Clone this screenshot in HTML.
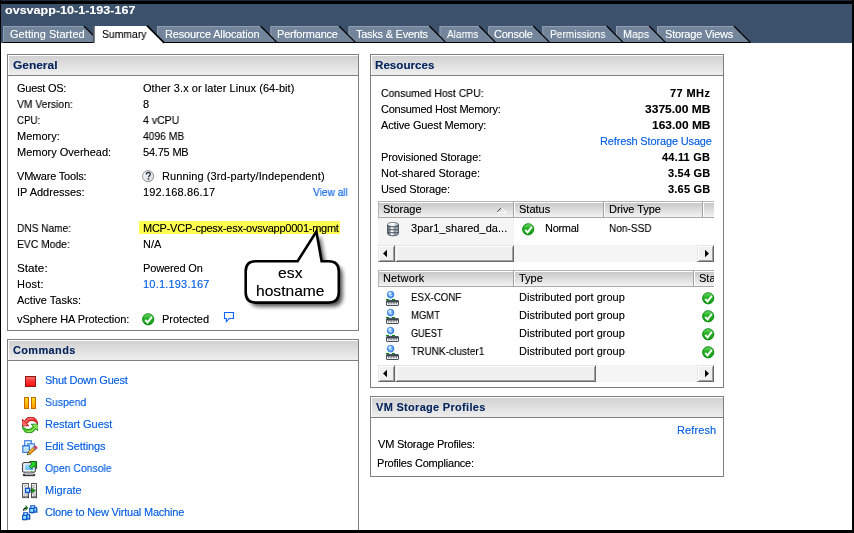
<!DOCTYPE html>
<html><head><meta charset="utf-8"><title>ovsvapp-10-1-193-167</title>
<style>
html,body{margin:0;padding:0;background:#fff;overflow:hidden;}
body{width:854px;height:533px;position:relative;overflow:hidden;font-family:"Liberation Sans",sans-serif;font-size:11px;line-height:13px;color:#000;}
.a{position:absolute;}
.t{position:absolute;white-space:pre;transform-origin:0 50%;will-change:transform;}
.panel{position:absolute;border:1px solid #7f7f7f;background:#fff;box-sizing:border-box;}
.ph{position:absolute;left:0;top:0;right:0;height:20px;border-bottom:1px solid #7f7f7f;background:linear-gradient(#d0d0d0,#eeeeee);box-shadow:inset 1px 1px 0 #fff;}
.th{position:absolute;height:15px;background:linear-gradient(#fff 0,#fff 1px,#c8c8c8 1px,#f3f3f3 100%);border-top:1px solid #b2b2b2;border-bottom:1px solid #a8a8a8;box-sizing:content-box;}
.thd{position:absolute;width:1px;height:15px;background:#a2a2a2;box-shadow:1px 0 0 #fff;}
.sb{position:absolute;height:17px;background:#f4f4f4;background-image:conic-gradient(#fbfbfb 25%,#efefef 0 50%,#fbfbfb 0 75%,#efefef 0);background-size:2px 2px;}
.btn{position:absolute;top:0;height:17px;background:#f0f0f0;border:1px solid;border-color:#e6e6e6 #696969 #696969 #e6e6e6;box-sizing:border-box;box-shadow:inset 1px 1px 0 #fff,inset -1px -1px 0 #a0a0a0;}
</style></head><body>
<!-- frame + header -->
<div class="a" style="left:0;top:0;width:854px;height:43px;background:#3c516c"></div>
<svg class="a" style="left:0;top:0" width="854" height="44" viewBox="0 0 854 44">
<rect x="3" y="42" width="747" height="1" fill="#000"/>
<polygon points="657.2,42 657.2,26 733.9,26 749.9,42" fill="#73859b"/>
<polyline points="657.7,42 657.7,26.5 734.9,26.5" fill="none" stroke="#8f9db1" stroke-width="1"/>
<line x1="733.9" y1="26" x2="750.5" y2="42.6" stroke="#000" stroke-width="1.25"/>
<polygon points="616,42 616,26 649.1,26 665.1,42" fill="#73859b"/>
<polyline points="616.5,42 616.5,26.5 650.1,26.5" fill="none" stroke="#8f9db1" stroke-width="1"/>
<line x1="649.1" y1="26" x2="665.7" y2="42.6" stroke="#000" stroke-width="1.25"/>
<polygon points="542.2,42 542.2,26 606.7,26 622.7,42" fill="#73859b"/>
<polyline points="542.7,42 542.7,26.5 607.7,26.5" fill="none" stroke="#8f9db1" stroke-width="1"/>
<line x1="606.7" y1="26" x2="623.3000000000001" y2="42.6" stroke="#000" stroke-width="1.25"/>
<polygon points="488.3,42 488.3,26 533.3,26 549.3,42" fill="#73859b"/>
<polyline points="488.8,42 488.8,26.5 534.3,26.5" fill="none" stroke="#8f9db1" stroke-width="1"/>
<line x1="533.3" y1="26" x2="549.9" y2="42.6" stroke="#000" stroke-width="1.25"/>
<polygon points="439.5,42 439.5,26 479.2,26 495.2,42" fill="#73859b"/>
<polyline points="440.0,42 440.0,26.5 480.2,26.5" fill="none" stroke="#8f9db1" stroke-width="1"/>
<line x1="479.2" y1="26" x2="495.8" y2="42.6" stroke="#000" stroke-width="1.25"/>
<polygon points="348.5,42 348.5,26 429.3,26 445.3,42" fill="#73859b"/>
<polyline points="349.0,42 349.0,26.5 430.3,26.5" fill="none" stroke="#8f9db1" stroke-width="1"/>
<line x1="429.3" y1="26" x2="445.90000000000003" y2="42.6" stroke="#000" stroke-width="1.25"/>
<polygon points="270.3,42 270.3,26 339.0,26 355.0,42" fill="#73859b"/>
<polyline points="270.8,42 270.8,26.5 340.0,26.5" fill="none" stroke="#8f9db1" stroke-width="1"/>
<line x1="339.0" y1="26" x2="355.6" y2="42.6" stroke="#000" stroke-width="1.25"/>
<polygon points="157,42 157,26 260.5,26 276.5,42" fill="#73859b"/>
<polyline points="157.5,42 157.5,26.5 261.5,26.5" fill="none" stroke="#8f9db1" stroke-width="1"/>
<line x1="260.5" y1="26" x2="277.1" y2="42.6" stroke="#000" stroke-width="1.25"/>
<polygon points="3,42 3,26 83.9,26 99.9,42" fill="#73859b"/>
<polyline points="3.5,42 3.5,26.5 84.9,26.5" fill="none" stroke="#8f9db1" stroke-width="1"/>
<line x1="83.9" y1="26" x2="100.5" y2="42.6" stroke="#000" stroke-width="1.25"/>
<polygon points="93,43 93,26 147.5,26 164.5,43" fill="#fff"/>
<line x1="93.9" y1="26" x2="93.9" y2="43" stroke="#333a44" stroke-width="1.5"/>
<line x1="147" y1="25.6" x2="164.2" y2="42.8" stroke="#000" stroke-width="1.7"/>
</svg>
<!-- panels -->
<div class="panel" style="left:7px;top:54px;width:352px;height:277px"><div class="ph"></div></div>
<div class="panel" style="left:7px;top:339px;width:352px;height:193px;border-bottom:none"><div class="ph"></div></div>
<div class="panel" style="left:370px;top:54px;width:354px;height:334px"><div class="ph"></div></div>
<div class="panel" style="left:370px;top:396px;width:354px;height:81px"><div class="ph"></div></div>
<!-- highlight -->
<div class="a" style="left:139px;top:221px;width:201px;height:13px;background:#ffff4f"></div>
<!-- storage table -->
<div class="a" style="left:378px;top:218px;width:136px;height:27px;background:#f5f5f5"></div>
<div class="th" style="left:378px;top:201px;width:336px"></div>
<div class="thd" style="left:378px;top:202px;background:#b5b5b5;box-shadow:none"></div>
<div class="thd" style="left:513px;top:202px"></div>
<div class="thd" style="left:603px;top:202px"></div>
<div class="thd" style="left:702px;top:202px"></div>
<svg class="a" style="left:494px;top:205px" width="14" height="9" viewBox="494 205 14 9"><path d="M501.3 207.6 L506.6 212.4 H497" fill="none" stroke="#fff" stroke-width="1"/><path d="M497.2 212 L501.2 207.7" fill="none" stroke="#4a4a4a" stroke-width="1"/></svg>
<div class="sb" style="left:378px;top:245px;width:336px">
  <div class="btn" style="left:0;width:17px"></div>
  <div class="btn" style="left:17px;width:119px"></div>
  <div class="btn" style="left:319px;width:17px"></div>
  <svg class="a" style="left:0;top:0" width="336" height="17"><polygon points="5,8.5 9,4.8 9,12.2" fill="#000"/><polygon points="331,8.5 327,4.8 327,12.2" fill="#000"/></svg>
</div>
<!-- network table -->
<div class="th" style="left:378px;top:270px;width:336px"></div>
<div class="thd" style="left:378px;top:271px;background:#b5b5b5;box-shadow:none"></div>
<div class="thd" style="left:513px;top:271px"></div>
<div class="thd" style="left:693px;top:271px"></div>
<div class="sb" style="left:378px;top:365px;width:336px">
  <div class="btn" style="left:0;width:17px"></div>
  <div class="btn" style="left:17px;width:201px"></div>
  <div class="btn" style="left:319px;width:17px"></div>
  <svg class="a" style="left:0;top:0" width="336" height="17"><polygon points="5,8.5 9,4.8 9,12.2" fill="#000"/><polygon points="331,8.5 327,4.8 327,12.2" fill="#000"/></svg>
</div>

<svg width="0" height="0" style="position:absolute"><defs>
<linearGradient id="gG" x1="0" y1="0" x2="0" y2="1"><stop offset="0" stop-color="#6fd86a"/><stop offset="0.45" stop-color="#22b022"/><stop offset="1" stop-color="#149c14"/></linearGradient>
<linearGradient id="gQ" x1="0" y1="0" x2="1" y2="1"><stop offset="0" stop-color="#ffffff"/><stop offset="1" stop-color="#cfd2d6"/></linearGradient>
<linearGradient id="gR" x1="0" y1="0" x2="0" y2="1"><stop offset="0" stop-color="#f27070"/><stop offset="0.5" stop-color="#fb3030"/><stop offset="1" stop-color="#ff1010"/></linearGradient>
<linearGradient id="gO" x1="0" y1="0" x2="0" y2="1"><stop offset="0" stop-color="#ffe020"/><stop offset="1" stop-color="#ff9a00"/></linearGradient>
<linearGradient id="gD" x1="0" y1="0" x2="1" y2="0"><stop offset="0" stop-color="#4e5a68"/><stop offset="0.15" stop-color="#7e8994"/><stop offset="0.38" stop-color="#c9ced4"/><stop offset="0.6" stop-color="#a4acb5"/><stop offset="0.85" stop-color="#727d89"/><stop offset="1" stop-color="#4a5663"/></linearGradient>
<linearGradient id="gDt" x1="0" y1="0" x2="1" y2="0"><stop offset="0" stop-color="#f4f6f8"/><stop offset="0.5" stop-color="#ffffff"/><stop offset="1" stop-color="#9aa4ae"/></linearGradient>
<radialGradient id="gB" cx="0.4" cy="0.35" r="0.75"><stop offset="0" stop-color="#d8ecff"/><stop offset="0.45" stop-color="#5aa2f4"/><stop offset="1" stop-color="#2470dc"/></radialGradient>
<linearGradient id="gS" x1="0" y1="0" x2="1" y2="1"><stop offset="0" stop-color="#b8e4ff"/><stop offset="1" stop-color="#36aaf6"/></linearGradient>
<linearGradient id="gT" x1="0" y1="0" x2="1" y2="1"><stop offset="0" stop-color="#ffffff"/><stop offset="0.5" stop-color="#ececec"/><stop offset="1" stop-color="#b4b4b4"/></linearGradient>
<linearGradient id="gE" x1="0" y1="0" x2="0" y2="1"><stop offset="0" stop-color="#8ecbf6"/><stop offset="1" stop-color="#d6eeff"/></linearGradient>
<linearGradient id="gA" x1="0" y1="0" x2="1" y2="0"><stop offset="0" stop-color="#30f030"/><stop offset="0.6" stop-color="#20d820"/><stop offset="1" stop-color="#0e9a0e"/></linearGradient>
<linearGradient id="gC" x1="0" y1="0" x2="0" y2="1"><stop offset="0" stop-color="#9ed8ff"/><stop offset="1" stop-color="#1f6fd8"/></linearGradient>
</defs></svg>
<svg class="a" style="left:142px;top:169.5px" width="13" height="13" viewBox="0 0 13 13"><circle cx="6.1" cy="6.2" r="5.6" fill="url(#gQ)" stroke="#868c94" stroke-width="0.9"/><path d="M4.3 4.4 C4.3 2.9 5.5 2.5 6.4 2.5 C7.9 2.5 8.7 3.6 8.2 4.7 C7.8 5.5 6.5 5.9 6.5 7.3" fill="none" stroke="#253245" stroke-width="1.35"/><rect x="5.7" y="8.3" width="1.5" height="1.4" fill="#253245"/></svg>
<svg class="a" style="left:142px;top:312.6px" width="13" height="13" viewBox="0 0 13 13"><circle cx="6.2" cy="6.3" r="5.6" fill="url(#gG)" stroke="#0f8c12" stroke-width="1"/><path d="M3.2 6.8 L5.5 9.4 L9.9 3.9" fill="none" stroke="#fff" stroke-width="1.9"/></svg>
<svg class="a" style="left:521.5px;top:222.8px" width="13" height="13" viewBox="0 0 13 13"><circle cx="6.2" cy="6.3" r="5.6" fill="url(#gG)" stroke="#0f8c12" stroke-width="1"/><path d="M3.2 6.8 L5.5 9.4 L9.9 3.9" fill="none" stroke="#fff" stroke-width="1.9"/></svg>
<svg class="a" style="left:702px;top:291.8px" width="13" height="13" viewBox="0 0 13 13"><circle cx="6.2" cy="6.3" r="5.6" fill="url(#gG)" stroke="#0f8c12" stroke-width="1"/><path d="M3.2 6.8 L5.5 9.4 L9.9 3.9" fill="none" stroke="#fff" stroke-width="1.9"/></svg>
<svg class="a" style="left:702px;top:309.8px" width="13" height="13" viewBox="0 0 13 13"><circle cx="6.2" cy="6.3" r="5.6" fill="url(#gG)" stroke="#0f8c12" stroke-width="1"/><path d="M3.2 6.8 L5.5 9.4 L9.9 3.9" fill="none" stroke="#fff" stroke-width="1.9"/></svg>
<svg class="a" style="left:702px;top:327.8px" width="13" height="13" viewBox="0 0 13 13"><circle cx="6.2" cy="6.3" r="5.6" fill="url(#gG)" stroke="#0f8c12" stroke-width="1"/><path d="M3.2 6.8 L5.5 9.4 L9.9 3.9" fill="none" stroke="#fff" stroke-width="1.9"/></svg>
<svg class="a" style="left:702px;top:345.8px" width="13" height="13" viewBox="0 0 13 13"><circle cx="6.2" cy="6.3" r="5.6" fill="url(#gG)" stroke="#0f8c12" stroke-width="1"/><path d="M3.2 6.8 L5.5 9.4 L9.9 3.9" fill="none" stroke="#fff" stroke-width="1.9"/></svg>
<svg class="a" style="left:223px;top:311px" width="13" height="13" viewBox="0 0 13 13"><path d="M1.5 1.5 H10.5 V7.5 H6.2 L3.3 10.6 L3.3 7.5 H1.5 Z" fill="#fff" stroke="#0a66ff" stroke-width="1.1" stroke-linejoin="miter"/></svg>
<svg class="a" style="left:25px;top:376px" width="11" height="11" viewBox="0 0 11 11"><rect x="0.5" y="0.5" width="10" height="10" fill="url(#gR)" stroke="#8a1616" stroke-width="1"/></svg>
<svg class="a" style="left:24px;top:397px" width="12" height="12" viewBox="0 0 12 12"><rect x="0.5" y="0.5" width="4" height="11" fill="url(#gO)" stroke="#c46a00"/><rect x="7.5" y="0.5" width="4" height="11" fill="url(#gO)" stroke="#c46a00"/></svg>
<svg class="a" style="left:22px;top:417px" width="16" height="16" viewBox="0 0 16 16"><g transform="translate(8,8)"><path d="M -8 -6 L -8 0.8 L -1.2 0.8 L -3.1 -1.3 C -2 -3.6 0.5 -4.9 3 -4.3 C 5 -3.7 6.4 -2.6 7.8 -0.9 C 7.7 -4.6 5 -7.7 1.5 -8 C -1.5 -8.2 -4 -6.8 -5.6 -3.7 Z" fill="#f03030" stroke="#a40808" stroke-width="0.8" stroke-linejoin="round"/><path d="M -7 -4 L -7 -0.2 L -3.4 -0.2 M -6.4 -3 L -3.6 -0.4 M -4.6 -2.8 C -3 -6 0.6 -7.2 3.4 -6.2" fill="none" stroke="#ff9090" stroke-width="1"/>
<g transform="rotate(180)"><path d="M -8 -6 L -8 0.8 L -1.2 0.8 L -3.1 -1.3 C -2 -3.6 0.5 -4.9 3 -4.3 C 5 -3.7 6.4 -2.6 7.8 -0.9 C 7.7 -4.6 5 -7.7 1.5 -8 C -1.5 -8.2 -4 -6.8 -5.6 -3.7 Z" fill="#48c81c" stroke="#0f7a0f" stroke-width="0.8" stroke-linejoin="round"/><path d="M -7 -4 L -7 -0.2 L -3.4 -0.2 M -6.4 -3 L -3.6 -0.4 M -4.6 -2.8 C -3 -6 0.6 -7.2 3.4 -6.2" fill="none" stroke="#b4f07a" stroke-width="1"/></g></g></svg>
<svg class="a" style="left:22px;top:440px" width="16" height="16" viewBox="0 0 16 16"><rect x="2.7" y="0.7" width="6.6" height="7" fill="#e4f2ff" stroke="#3078dc" stroke-width="1.1"/>
<rect x="5.9" y="3.8" width="6.5" height="6.3" fill="#d4ecff" stroke="#3078dc" stroke-width="1.1"/>
<rect x="0.8" y="5.7" width="6.5" height="6.6" fill="url(#gE)" stroke="#2a70d6" stroke-width="1.1"/>
<path d="M1.6 7.8 H6.6" stroke="#e8f6ff" stroke-width="0.9"/><path d="M6.21 11.87 L11.29 7.53 L13.24 9.82 L8.15 14.15 Z" fill="#f59a0a" stroke="#8a5200" stroke-width="0.5"/><path d="M6.85 12.63 L11.94 8.30" stroke="#ffd050" stroke-width="0.9"/><path d="M7.76 13.70 L12.85 9.36" stroke="#c86a00" stroke-width="0.7"/><path d="M5.20 14.70 L6.21 11.87 L8.15 14.15 Z" fill="#f0e040" stroke="#222" stroke-width="0.5"/><path d="M5.05 14.83 L5.58 13.45 L6.49 14.52 Z" fill="#111"/><path d="M11.29 7.53 L12.20 6.76 L14.15 9.04 L13.24 9.82 Z" fill="#f4f4f4" stroke="#222" stroke-width="0.6"/><path d="M12.20 6.76 L13.27 5.85 Q14.93 6.41 15.22 8.13 L14.15 9.04 Z" fill="#f04a4a" stroke="#b02060" stroke-width="0.5"/><path d="M14.27 7.49 L15.16 7.91" stroke="#c020a0" stroke-width="0.9"/></svg>
<svg class="a" style="left:22px;top:461px" width="16" height="16" viewBox="0 0 16 16"><rect x="0.6" y="1.6" width="12.7" height="9.6" rx="1.2" fill="#f2f4fb" stroke="#2e2e2e" stroke-width="1"/>
<rect x="2.8" y="3.4" width="8.4" height="5.6" fill="url(#gS)"/>
<rect x="9" y="9.9" width="1.4" height="0.9" fill="#30c030"/>
<rect x="4" y="11.7" width="6.4" height="1.5" fill="#d4d8e2"/>
<rect x="1.2" y="13.2" width="11.6" height="1.5" rx="0.5" fill="#3a3a3a" stroke="#111" stroke-width="0.8"/><rect x="3" y="12.9" width="8.4" height="0.8" fill="#e4e6ee"/>
<path d="M7.6 0.5 L14.6 0.5 L14.6 7.4 L12.2 5 L9.6 7.6 L7.4 5.4 L10 2.8 Z" fill="url(#gA)" stroke="#0a3a0a" stroke-width="0.8" stroke-linejoin="round"/></svg>
<svg class="a" style="left:22px;top:483px" width="16" height="16" viewBox="0 0 16 16"><rect x="0.6" y="0.6" width="6" height="13.4" fill="url(#gT)" stroke="#3c3c3c" stroke-width="0.9"/>
<rect x="9.5" y="0.6" width="5" height="13.4" fill="url(#gT)" stroke="#3c3c3c" stroke-width="0.9"/>
<path d="M2.6 2.6 H4.6 M2.6 2.6 V4 M10.8 2.6 H12.8 M10.8 2.6 V4 M11 4.4 H13 M2.4 11 V12 M10.6 11 H12" stroke="#8a8a8a" stroke-width="0.7" fill="none"/>
<path d="M1 14 V15.2 M2.4 14 V15.2 M5 14 V15.2 M6.4 14 V15.2 M9.8 14 V15.2 M11.2 14 V15.2 M13 14 V15.2 M14.3 14 V15.2" stroke="#222" stroke-width="0.9"/>
<rect x="6.9" y="0.9" width="2.2" height="3.4" fill="#fff"/><rect x="7.1" y="10.4" width="1.8" height="3.2" fill="#fff"/>
<rect x="3.5" y="5.3" width="4.2" height="4.2" fill="#8fd2ff" stroke="#0c4ec6" stroke-width="1.3"/><path d="M4.4 7 H6.8" stroke="#e8f8ff" stroke-width="0.8"/>
<path d="M8.3 6.9 H10.4 V5.2 L13.4 7.5 L10.4 9.9 V8.1 H8.3 Z" fill="#149414" stroke="#0a5a0a" stroke-width="0.5"/></svg>
<svg class="a" style="left:22px;top:504.6px" width="16" height="16" viewBox="0 0 16 16"><g transform="translate(7.1,0.2)"><path d="M1 8.1 H5 M8.3 3.4 V7.2 H5.6" stroke="#b8b09a" stroke-width="0.6" fill="none"/>
<rect x="1.7" y="0.6" width="4" height="3.2" fill="#7fd4ff" stroke="#0c4cc4" stroke-width="1.1"/>
<rect x="4.6" y="2.5" width="3" height="4.4" fill="#5cc4ff" stroke="#0c4cc4" stroke-width="1.1"/>
<rect x="0.6" y="3.2" width="4.1" height="4.2" fill="#6ccfff" stroke="#0c4cc4" stroke-width="1.1"/>
<path d="M2.6 1.8 H4.8 M1.5 4.8 H3.8 M5.6 4 H6.8" stroke="#d8f6ff" stroke-width="0.9"/></g><g transform="translate(0,7.2)"><path d="M1 8.1 H5 M8.3 3.4 V7.2 H5.6" stroke="#b8b09a" stroke-width="0.6" fill="none"/>
<rect x="1.7" y="0.6" width="4" height="3.2" fill="#7fd4ff" stroke="#0c4cc4" stroke-width="1.1"/>
<rect x="4.6" y="2.5" width="3" height="4.4" fill="#5cc4ff" stroke="#0c4cc4" stroke-width="1.1"/>
<rect x="0.6" y="3.2" width="4.1" height="4.2" fill="#6ccfff" stroke="#0c4cc4" stroke-width="1.1"/>
<path d="M2.6 1.8 H4.8 M1.5 4.8 H3.8 M5.6 4 H6.8" stroke="#d8f6ff" stroke-width="0.9"/></g><path d="M1.9 5.8 C1.6 3.8 2.4 3 4 3.1" fill="none" stroke="#0a0a0a" stroke-width="1.2"/><path d="M3.6 0.4 L6.2 2.9 L3.6 5.4 L4 3.6 L2.9 3 L4 2.2 Z" fill="#138a13" stroke="#0a4a0a" stroke-width="0.4"/></svg>
<svg class="a" style="left:387px;top:221.6px" width="12" height="15" viewBox="0 0 12 15"><path d="M0.5 2.6 V11.4 C0.5 14.6 11.5 14.6 11.5 11.4 V2.6 Z" fill="url(#gD)" stroke="#4e5a68" stroke-width="0.9"/>
<path d="M0.6 4.3 C2 5 10 5 11.4 4.3 M0.6 7.3 C2 8 10 8 11.4 7.3 M0.6 10.3 C2 11 10 11 11.4 10.3" fill="none" stroke="#465260" stroke-width="1"/>
<rect x="3.9" y="5.5" width="2.4" height="1.5" fill="#fff"/><rect x="3.9" y="8.5" width="2.4" height="1.5" fill="#fff"/><rect x="3.9" y="11.5" width="2.4" height="1.5" fill="#fff"/>
<rect x="9.2" y="5.4" width="1.4" height="1.4" fill="#d4d9de"/><rect x="9.2" y="8.4" width="1.4" height="1.4" fill="#d4d9de"/><rect x="9.2" y="11.2" width="1.2" height="1.2" fill="#c4cad0"/>
<ellipse cx="6" cy="2.4" rx="5.5" ry="2" fill="url(#gDt)" stroke="#5a6672" stroke-width="0.8"/></svg>
<svg class="a" style="left:386px;top:290px" width="14" height="16" viewBox="0 0 14 16"><circle cx="4.6" cy="4.6" r="3.4" fill="url(#gB)" stroke="#2a74dc" stroke-width="0.6"/>
<path d="M2.6 3.8 C3.2 2.4 4.4 2.4 5 3 C4.4 4 3.6 3.8 3.6 5 C4.2 6.4 5.6 6.2 6.4 5" fill="none" stroke="#e6f4ff" stroke-width="0.9"/>
<rect x="4" y="7.7" width="1.4" height="1.4" fill="#9cc8f4"/>
<rect x="0" y="9" width="3" height="1" fill="#058c05"/><rect x="6" y="9" width="3" height="1" fill="#058c05"/><rect x="3" y="9" width="3" height="1" fill="#d6e8fb"/>
<rect x="0.5" y="10.5" width="12" height="5" rx="0.5" fill="#fbfbfb" stroke="#46505c" stroke-width="1"/>
<rect x="1" y="11" width="11" height="1.5" fill="#3e4854"/>
<path d="M2.5 12.3 V14.4 M4.1 12.3 V14.4 M5.7 12.3 V14.4 M7.3 12.3 V14.4 M8.9 12.3 V14.4 M10.5 12.3 V14.4" stroke="#444" stroke-width="0.6"/></svg>
<svg class="a" style="left:386px;top:308px" width="14" height="16" viewBox="0 0 14 16"><circle cx="4.6" cy="4.6" r="3.4" fill="url(#gB)" stroke="#2a74dc" stroke-width="0.6"/>
<path d="M2.6 3.8 C3.2 2.4 4.4 2.4 5 3 C4.4 4 3.6 3.8 3.6 5 C4.2 6.4 5.6 6.2 6.4 5" fill="none" stroke="#e6f4ff" stroke-width="0.9"/>
<rect x="4" y="7.7" width="1.4" height="1.4" fill="#9cc8f4"/>
<rect x="0" y="9" width="3" height="1" fill="#058c05"/><rect x="6" y="9" width="3" height="1" fill="#058c05"/><rect x="3" y="9" width="3" height="1" fill="#d6e8fb"/>
<rect x="0.5" y="10.5" width="12" height="5" rx="0.5" fill="#fbfbfb" stroke="#46505c" stroke-width="1"/>
<rect x="1" y="11" width="11" height="1.5" fill="#3e4854"/>
<path d="M2.5 12.3 V14.4 M4.1 12.3 V14.4 M5.7 12.3 V14.4 M7.3 12.3 V14.4 M8.9 12.3 V14.4 M10.5 12.3 V14.4" stroke="#444" stroke-width="0.6"/></svg>
<svg class="a" style="left:386px;top:326px" width="14" height="16" viewBox="0 0 14 16"><circle cx="4.6" cy="4.6" r="3.4" fill="url(#gB)" stroke="#2a74dc" stroke-width="0.6"/>
<path d="M2.6 3.8 C3.2 2.4 4.4 2.4 5 3 C4.4 4 3.6 3.8 3.6 5 C4.2 6.4 5.6 6.2 6.4 5" fill="none" stroke="#e6f4ff" stroke-width="0.9"/>
<rect x="4" y="7.7" width="1.4" height="1.4" fill="#9cc8f4"/>
<rect x="0" y="9" width="3" height="1" fill="#058c05"/><rect x="6" y="9" width="3" height="1" fill="#058c05"/><rect x="3" y="9" width="3" height="1" fill="#d6e8fb"/>
<rect x="0.5" y="10.5" width="12" height="5" rx="0.5" fill="#fbfbfb" stroke="#46505c" stroke-width="1"/>
<rect x="1" y="11" width="11" height="1.5" fill="#3e4854"/>
<path d="M2.5 12.3 V14.4 M4.1 12.3 V14.4 M5.7 12.3 V14.4 M7.3 12.3 V14.4 M8.9 12.3 V14.4 M10.5 12.3 V14.4" stroke="#444" stroke-width="0.6"/></svg>
<svg class="a" style="left:386px;top:344px" width="14" height="16" viewBox="0 0 14 16"><circle cx="4.6" cy="4.6" r="3.4" fill="url(#gB)" stroke="#2a74dc" stroke-width="0.6"/>
<path d="M2.6 3.8 C3.2 2.4 4.4 2.4 5 3 C4.4 4 3.6 3.8 3.6 5 C4.2 6.4 5.6 6.2 6.4 5" fill="none" stroke="#e6f4ff" stroke-width="0.9"/>
<rect x="4" y="7.7" width="1.4" height="1.4" fill="#9cc8f4"/>
<rect x="0" y="9" width="3" height="1" fill="#058c05"/><rect x="6" y="9" width="3" height="1" fill="#058c05"/><rect x="3" y="9" width="3" height="1" fill="#d6e8fb"/>
<rect x="0.5" y="10.5" width="12" height="5" rx="0.5" fill="#fbfbfb" stroke="#46505c" stroke-width="1"/>
<rect x="1" y="11" width="11" height="1.5" fill="#3e4854"/>
<path d="M2.5 12.3 V14.4 M4.1 12.3 V14.4 M5.7 12.3 V14.4 M7.3 12.3 V14.4 M8.9 12.3 V14.4 M10.5 12.3 V14.4" stroke="#444" stroke-width="0.6"/></svg>
<span class="t" style="left:5px;top:4px;font-weight:700;color:#fff;text-shadow:0 0 0 rgba(255,255,255,0.4);transform:scaleX(1.1404);">ovsvapp-10-1-193-167</span>
<span class="t" style="left:10px;top:28px;color:#fff;text-shadow:0 0 0 rgba(255,255,255,0.4);letter-spacing:0.05px;">Getting Started</span>
<span class="t" style="left:101.5px;top:28px;text-shadow:0 0 0 rgba(0,0,0,0.4);transform:scaleX(0.9435);">Summary</span>
<span class="t" style="left:164.5px;top:28px;color:#fff;text-shadow:0 0 0 rgba(255,255,255,0.4);letter-spacing:-0.15px;">Resource Allocation</span>
<span class="t" style="left:277px;top:28px;color:#fff;text-shadow:0 0 0 rgba(255,255,255,0.4);letter-spacing:-0.2px;">Performance</span>
<span class="t" style="left:356px;top:28px;color:#fff;text-shadow:0 0 0 rgba(255,255,255,0.4);letter-spacing:-0.25px;">Tasks &amp; Events</span>
<span class="t" style="left:447px;top:28px;color:#fff;text-shadow:0 0 0 rgba(255,255,255,0.4);transform:scaleX(0.9147);">Alarms</span>
<span class="t" style="left:493.5px;top:28px;color:#fff;text-shadow:0 0 0 rgba(255,255,255,0.4);letter-spacing:-0.25px;">Console</span>
<span class="t" style="left:549.5px;top:28px;color:#fff;text-shadow:0 0 0 rgba(255,255,255,0.4);transform:scaleX(0.9237);">Permissions</span>
<span class="t" style="left:622.5px;top:28px;color:#fff;text-shadow:0 0 0 rgba(255,255,255,0.4);transform:scaleX(0.9698);">Maps</span>
<span class="t" style="left:664.5px;top:28px;color:#fff;text-shadow:0 0 0 rgba(255,255,255,0.4);letter-spacing:-0.2px;">Storage Views</span>
<span class="t" style="left:13px;top:59px;font-weight:700;color:#06265e;text-shadow:0 0 0 rgba(6,38,94,0.4);transform:scaleX(1.0850);">General</span>
<span class="t" style="left:13px;top:344px;font-weight:700;color:#06265e;text-shadow:0 0 0 rgba(6,38,94,0.4);letter-spacing:0.35px;">Commands</span>
<span class="t" style="left:375px;top:59px;font-weight:700;color:#06265e;text-shadow:0 0 0 rgba(6,38,94,0.4);transform:scaleX(1.0564);">Resources</span>
<span class="t" style="left:376px;top:401px;font-weight:700;color:#06265e;text-shadow:0 0 0 rgba(6,38,94,0.4);letter-spacing:0.3px;">VM Storage Profiles</span>
<span class="t" style="left:17px;top:82px;text-shadow:0 0 0 rgba(0,0,0,0.4);letter-spacing:-0.25px;">Guest OS:</span>
<span class="t" style="left:17px;top:98px;text-shadow:0 0 0 rgba(0,0,0,0.4);transform:scaleX(0.9397);">VM Version:</span>
<span class="t" style="left:17px;top:114px;text-shadow:0 0 0 rgba(0,0,0,0.4);transform:scaleX(0.8853);">CPU:</span>
<span class="t" style="left:17px;top:130px;text-shadow:0 0 0 rgba(0,0,0,0.4);">Memory:</span>
<span class="t" style="left:17px;top:146px;text-shadow:0 0 0 rgba(0,0,0,0.4);">Memory Overhead:</span>
<span class="t" style="left:17px;top:170px;text-shadow:0 0 0 rgba(0,0,0,0.4);letter-spacing:-0.2px;">VMware Tools:</span>
<span class="t" style="left:17px;top:186px;text-shadow:0 0 0 rgba(0,0,0,0.4);">IP Addresses:</span>
<span class="t" style="left:17px;top:222px;text-shadow:0 0 0 rgba(0,0,0,0.4);transform:scaleX(0.9211);">DNS Name:</span>
<span class="t" style="left:17px;top:238px;text-shadow:0 0 0 rgba(0,0,0,0.4);transform:scaleX(0.9389);">EVC Mode:</span>
<span class="t" style="left:17px;top:262px;text-shadow:0 0 0 rgba(0,0,0,0.4);transform:scaleX(1.0667);">State:</span>
<span class="t" style="left:17px;top:278px;text-shadow:0 0 0 rgba(0,0,0,0.4);letter-spacing:0.25px;">Host:</span>
<span class="t" style="left:17px;top:294px;text-shadow:0 0 0 rgba(0,0,0,0.4);">Active Tasks:</span>
<span class="t" style="left:17px;top:313px;text-shadow:0 0 0 rgba(0,0,0,0.4);letter-spacing:-0.1px;">vSphere HA Protection:</span>
<span class="t" style="left:143px;top:82px;text-shadow:0 0 0 rgba(0,0,0,0.4);letter-spacing:0.05px;">Other 3.x or later Linux (64-bit)</span>
<span class="t" style="left:143px;top:98px;text-shadow:0 0 0 rgba(0,0,0,0.4);">8</span>
<span class="t" style="left:143px;top:114px;text-shadow:0 0 0 rgba(0,0,0,0.4);transform:scaleX(0.9568);">4 vCPU</span>
<span class="t" style="left:143px;top:130px;text-shadow:0 0 0 rgba(0,0,0,0.4);transform:scaleX(0.9364);">4096 MB</span>
<span class="t" style="left:143px;top:146px;text-shadow:0 0 0 rgba(0,0,0,0.4);letter-spacing:-0.2px;">54.75 MB</span>
<span class="t" style="left:162px;top:170px;text-shadow:0 0 0 rgba(0,0,0,0.4);letter-spacing:0.1px;">Running (3rd-party/Independent)</span>
<span class="t" style="left:143px;top:186px;text-shadow:0 0 0 rgba(0,0,0,0.4);letter-spacing:0.15px;">192.168.86.17</span>
<span class="t" style="left:313px;top:186px;color:#0660e6;text-shadow:0 0 0 rgba(6,96,230,0.4);transform:scaleX(0.9243);">View all</span>
<span class="t" style="left:142.5px;top:222px;text-shadow:0 0 0 rgba(0,0,0,0.4);letter-spacing:-0.25px;">MCP-VCP-cpesx-esx-ovsvapp0001-mgmt</span>
<span class="t" style="left:143px;top:238px;text-shadow:0 0 0 rgba(0,0,0,0.4);">N/A</span>
<span class="t" style="left:143px;top:262px;text-shadow:0 0 0 rgba(0,0,0,0.4);letter-spacing:-0.15px;">Powered On</span>
<span class="t" style="left:143px;top:278px;color:#0660e6;text-shadow:0 0 0 rgba(6,96,230,0.4);letter-spacing:0.2px;">10.1.193.167</span>
<span class="t" style="left:162px;top:313px;text-shadow:0 0 0 rgba(0,0,0,0.4);">Protected</span>
<span class="t" style="left:44.5px;top:374px;color:#0660e6;text-shadow:0 0 0 rgba(6,96,230,0.4);letter-spacing:-0.25px;">Shut Down Guest</span>
<span class="t" style="left:44.5px;top:396px;color:#0660e6;text-shadow:0 0 0 rgba(6,96,230,0.4);transform:scaleX(0.9524);">Suspend</span>
<span class="t" style="left:44.5px;top:418px;color:#0660e6;text-shadow:0 0 0 rgba(6,96,230,0.4);letter-spacing:-0.05px;">Restart Guest</span>
<span class="t" style="left:44.5px;top:440px;color:#0660e6;text-shadow:0 0 0 rgba(6,96,230,0.4);letter-spacing:-0.1px;">Edit Settings</span>
<span class="t" style="left:44.5px;top:462px;color:#0660e6;text-shadow:0 0 0 rgba(6,96,230,0.4);transform:scaleX(0.9464);">Open Console</span>
<span class="t" style="left:44.5px;top:484px;color:#0660e6;text-shadow:0 0 0 rgba(6,96,230,0.4);">Migrate</span>
<span class="t" style="left:44.5px;top:506px;color:#0660e6;text-shadow:0 0 0 rgba(6,96,230,0.4);letter-spacing:-0.2px;">Clone to New Virtual Machine</span>
<span class="t" style="left:380.5px;top:87px;text-shadow:0 0 0 rgba(0,0,0,0.4);transform:scaleX(0.9481);">Consumed Host CPU:</span>
<span class="t" style="left:380.5px;top:103px;text-shadow:0 0 0 rgba(0,0,0,0.4);letter-spacing:-0.25px;">Consumed Host Memory:</span>
<span class="t" style="left:380.5px;top:119px;text-shadow:0 0 0 rgba(0,0,0,0.4);letter-spacing:-0.15px;">Active Guest Memory:</span>
<span class="t" style="left:380.5px;top:151px;text-shadow:0 0 0 rgba(0,0,0,0.4);letter-spacing:-0.1px;">Provisioned Storage:</span>
<span class="t" style="left:380.5px;top:167px;text-shadow:0 0 0 rgba(0,0,0,0.4);">Not-shared Storage:</span>
<span class="t" style="left:380.5px;top:183px;text-shadow:0 0 0 rgba(0,0,0,0.4);letter-spacing:-0.1px;">Used Storage:</span>
<span class="t" style="left:670px;top:87px;font-weight:700;text-shadow:0 0 0 rgba(0,0,0,0.4);letter-spacing:0.4px;">77 MHz</span>
<span class="t" style="left:645px;top:103px;font-weight:700;text-shadow:0 0 0 rgba(0,0,0,0.4);transform:scaleX(1.0934);">3375.00 MB</span>
<span class="t" style="left:652px;top:119px;font-weight:700;text-shadow:0 0 0 rgba(0,0,0,0.4);transform:scaleX(1.0865);">163.00 MB</span>
<span class="t" style="left:662px;top:151px;font-weight:700;text-shadow:0 0 0 rgba(0,0,0,0.4);letter-spacing:0.2px;">44.11 GB</span>
<span class="t" style="left:668px;top:167px;font-weight:700;text-shadow:0 0 0 rgba(0,0,0,0.4);letter-spacing:0.2px;">3.54 GB</span>
<span class="t" style="left:668px;top:183px;font-weight:700;text-shadow:0 0 0 rgba(0,0,0,0.4);letter-spacing:0.2px;">3.65 GB</span>
<span class="t" style="left:599.5px;top:135px;color:#0660e6;text-shadow:0 0 0 rgba(6,96,230,0.4);letter-spacing:-0.15px;">Refresh Storage Usage</span>
<span class="t" style="left:383px;top:203px;text-shadow:0 0 0 rgba(0,0,0,0.4);">Storage</span>
<span class="t" style="left:519px;top:203px;text-shadow:0 0 0 rgba(0,0,0,0.4);">Status</span>
<span class="t" style="left:609px;top:203px;text-shadow:0 0 0 rgba(0,0,0,0.4);letter-spacing:-0.05px;">Drive Type</span>
<span class="t" style="left:411px;top:222px;text-shadow:0 0 0 rgba(0,0,0,0.4);letter-spacing:0.05px;">3par1_shared_da...</span>
<span class="t" style="left:545px;top:222px;text-shadow:0 0 0 rgba(0,0,0,0.4);letter-spacing:-0.3px;">Normal</span>
<span class="t" style="left:609px;top:222px;text-shadow:0 0 0 rgba(0,0,0,0.4);transform:scaleX(0.9167);">Non-SSD</span>
<span class="t" style="left:383px;top:272px;text-shadow:0 0 0 rgba(0,0,0,0.4);letter-spacing:0.15px;">Network</span>
<span class="t" style="left:519px;top:272px;text-shadow:0 0 0 rgba(0,0,0,0.4);">Type</span>
<span class="t" style="left:699px;top:272px;text-shadow:0 0 0 rgba(0,0,0,0.4);">Sta</span>
<span class="t" style="left:411px;top:291px;text-shadow:0 0 0 rgba(0,0,0,0.4);transform:scaleX(0.8864);">ESX-CONF</span>
<span class="t" style="left:519px;top:291px;text-shadow:0 0 0 rgba(0,0,0,0.4);">Distributed port group</span>
<span class="t" style="left:411px;top:309px;text-shadow:0 0 0 rgba(0,0,0,0.4);transform:scaleX(0.8594);">MGMT</span>
<span class="t" style="left:519px;top:309px;text-shadow:0 0 0 rgba(0,0,0,0.4);">Distributed port group</span>
<span class="t" style="left:411px;top:327px;text-shadow:0 0 0 rgba(0,0,0,0.4);transform:scaleX(0.8311);">GUEST</span>
<span class="t" style="left:519px;top:327px;text-shadow:0 0 0 rgba(0,0,0,0.4);">Distributed port group</span>
<span class="t" style="left:411px;top:345px;text-shadow:0 0 0 rgba(0,0,0,0.4);transform:scaleX(0.9156);">TRUNK-cluster1</span>
<span class="t" style="left:519px;top:345px;text-shadow:0 0 0 rgba(0,0,0,0.4);">Distributed port group</span>
<span class="t" style="left:677px;top:424px;color:#0660e6;text-shadow:0 0 0 rgba(6,96,230,0.4);letter-spacing:0.1px;">Refresh</span>
<span class="t" style="left:377.8px;top:438px;text-shadow:0 0 0 rgba(0,0,0,0.4);letter-spacing:-0.2px;">VM Storage Profiles:</span>
<span class="t" style="left:377.2px;top:457px;text-shadow:0 0 0 rgba(0,0,0,0.4);letter-spacing:-0.2px;">Profiles Compliance:</span>
<div class="a" style="left:714px;top:268px;width:9px;height:22px;background:#fff"></div>
<svg class="a" style="left:230px;top:220px;overflow:visible" width="130" height="100" viewBox="230 220 130 100">
<defs><filter id="sh" x="-20%" y="-20%" width="150%" height="150%"><feGaussianBlur stdDeviation="1.9"/></filter></defs>
<path d="M255.7 261.2 H297.6 L316.4 231.5 L321.6 261.2 H328.8 Q338.8 261.2 338.8 271.2 V292.6 Q338.8 302.6 328.8 302.6 H255.7 Q245.7 302.6 245.7 292.6 V271.2 Q245.7 261.2 255.7 261.2 Z" fill="#000" opacity="0.7" filter="url(#sh)" transform="translate(3.8,4)"/>
<path d="M255.7 261.2 H297.6 L316.4 231.5 L321.6 261.2 H328.8 Q338.8 261.2 338.8 271.2 V292.6 Q338.8 302.6 328.8 302.6 H255.7 Q245.7 302.6 245.7 292.6 V271.2 Q245.7 261.2 255.7 261.2 Z" fill="#fff" stroke="#000" stroke-width="2.6" stroke-linejoin="miter"/>
</svg>
<span class="t" style="left:277.5px;top:266px;font-size:15px;text-shadow:0 0 0 rgba(0,0,0,0.4);transform:scaleX(1.0500);">esx</span>
<span class="t" style="left:255.5px;top:283.7px;font-size:15px;text-shadow:0 0 0 rgba(0,0,0,0.4);transform:scaleX(1.0391);">hostname</span>
<!-- outer black frame -->
<div class="a" style="left:0;top:0;width:854px;height:1px;background:#1e2a3a"></div>
<div class="a" style="left:0;top:1px;width:854px;height:3px;background:#000"></div>
<div class="a" style="left:0;top:530px;width:854px;height:3px;background:#000"></div>
<div class="a" style="left:0;top:0;width:1px;height:533px;background:#000"></div>
<div class="a" style="left:852px;top:0;width:2px;height:533px;background:#000"></div>
</body></html>
